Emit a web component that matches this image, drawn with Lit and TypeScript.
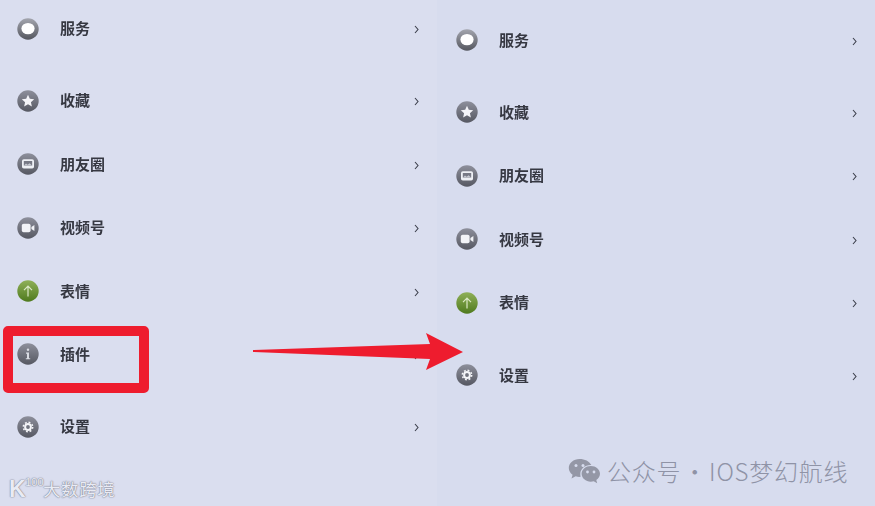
import { LitElement, html, css, svg } from "lit";
import { customElement } from "lit/decorators.js";

type Kind = "chat" | "star" | "photo" | "video" | "up" | "info" | "gear";
interface Item { kind: Kind; label: string; group?: boolean }

const icon = (k: Kind) => {
  const green = k === "up";
  const id = green ? "url(#gg)" : k === "chat" ? "url(#gl)" : "url(#gd)";
  let inner;
  switch (k) {
    case "chat":
      inner = svg`<ellipse cx="11" cy="10.6" rx="6.6" ry="5.7" fill="#fff"/>`;
      break;
    case "star":
      inner = svg`<path d="M11 4.800l1.800 4 4.400.4-3.300 3 1 4.400-3.900-2.300-3.900 2.300 1-4.400-3.300-3 4.400-.4z" fill="#f4f4f8"/>`;
      break;
    case "photo":
      inner = svg`<rect x="5" y="6.200" width="12" height="9.400" rx="1.800" fill="#eef0f5"/><rect x="6.800" y="8" width="8.400" height="4.600" fill="#777985"/><path d="M7 12.600l2-2 1.600 1.200 2-1.600 2.400 2.400z" fill="#c8cad3"/>`;
      break;
    case "video":
      inner = svg`<rect x="4.800" y="6.800" width="8.800" height="8.400" rx="1.800" fill="#f2f3f7"/><path d="M14.400 10l3-2v6l-3-2z" fill="#f2f3f7"/>`;
      break;
    case "up":
      inner = svg`<path d="M11 16.400V6.400M7 10.200l4-4 4 4" fill="none" stroke="#dbe8c6" stroke-width="1.200"/>`;
      break;
    case "info":
      inner = svg`<circle cx="11" cy="6.800" r="1.200" fill="#d9dbe3"/><path d="M9 9.600h3v5.600h1.200v1.100H8.800v-1.100H10v-4.500H9z" fill="#d9dbe3"/>`;
      break;
    case "gear":
      inner = svg`<circle cx="11" cy="11" r="2.900" fill="none" stroke="#f4f5f8" stroke-width="2"/><circle cx="11" cy="11" r="4.700" fill="none" stroke="#f4f5f8" stroke-width="1.500" stroke-dasharray="1.850 1.840"/>`;
      break;
  }
  return html`<svg class="ic" width="22" height="22" viewBox="0 0 22 22">
    <defs>
      <linearGradient id="gd" x1="0" y1="0" x2="0" y2="1"><stop offset="0" stop-color="#8d8f9b"/><stop offset="1" stop-color="#565862"/></linearGradient>
      <linearGradient id="gl" x1="0" y1="0" x2="0" y2="1"><stop offset="0" stop-color="#a3a5ae"/><stop offset="1" stop-color="#55575f"/></linearGradient>
      <linearGradient id="gg" x1="0" y1="0" x2="0" y2="1"><stop offset="0" stop-color="#8fb058"/><stop offset="1" stop-color="#4f7a1e"/></linearGradient>
    </defs>
    <circle cx="11" cy="11" r="10.700" fill="${id}"/>${inner}
  </svg>`;
};

const LEFT: Item[] = [
  { kind: "chat", label: "服务" },
  { kind: "star", label: "收藏", group: true },
  { kind: "photo", label: "朋友圈" },
  { kind: "video", label: "视频号" },
  { kind: "up", label: "表情" },
  { kind: "info", label: "插件" },
  { kind: "gear", label: "设置", group: true },
];
const RIGHT: Item[] = [
  { kind: "chat", label: "服务" },
  { kind: "star", label: "收藏", group: true },
  { kind: "photo", label: "朋友圈" },
  { kind: "video", label: "视频号" },
  { kind: "up", label: "表情" },
  { kind: "gear", label: "设置", group: true },
];

@customElement("app-root")
export class AppRoot extends LitElement {
  static styles = css`
    :host { display: block; width: 875px; height: 506px; position: relative; overflow: hidden; font-family: "Noto Sans CJK SC", "Noto Sans", sans-serif; }
    .page { display: flex; height: 506px; }
    .panel { display: flex; flex-direction: column; box-sizing: border-box; height: 506px; filter: blur(0.35px); }
    .left { width: 437px; gap: 23.4px; padding: 8.800px 18px 0 17px; background: #dadeef; }
    .right { width: 438px; gap: 23.5px; padding: 20.300px 18px 0 19px; background: #d7dcee; }
    .row { display: flex; align-items: center; height: 40px; flex: none; }
    .row.group { margin-top: 8.700px; }
    .ic { flex: none; }
    .label { margin-left: 21px; font-size: 15px; font-weight: 700; color: #363842; flex: 1; line-height: 20px; position: relative; top: -0.500px; }
    .chev { flex: none; margin-top: 2px; }
    .box { position: absolute; left: 3px; top: 326px; width: 146px; height: 67px; box-sizing: border-box; border: 10px solid #ee1c2e; border-radius: 5px; }
    .arrow { position: absolute; left: 250px; top: 330px; }
    .wm1 { position: absolute; left: 9px; top: 474px; display: flex; align-items: center; color: #e9ebf4; text-shadow: 0 0 1.500px #777a8a, 0 0 1px #777a8a; }
    .wm1 .k { font-family: "Liberation Sans", sans-serif; font-size: 23px; font-weight: 700; line-height: 30px; width: 16px; }
    .wm1 .n { font-family: "Liberation Sans", sans-serif; font-size: 11.500px; line-height: 14px; align-self: flex-start; margin-top: 1px; width: 18px; letter-spacing: -0.300px; }
    .wm1 .t { font-size: 17.500px; line-height: 30px; letter-spacing: 0.600px; }
    .wm2 { position: absolute; left: 568px; top: 453px; display: flex; align-items: center; gap: 6px; color: #8f93a6; font-size: 24px; font-weight: 300; line-height: 36px; white-space: pre; letter-spacing: 0.750px; word-spacing: -4.500px; }
  `;

  private renderRow(it: Item) {
    return html`<div class="row ${it.group ? "group" : ""}">
      ${icon(it.kind)}
      <span class="label">${it.label}</span>
      <svg class="chev" width="5" height="9" viewBox="0 0 5 9"><path d="M1 1l3 3.500L1 8" fill="none" stroke="#3c3f4c" stroke-width="1.100"/></svg>
    </div>`;
  }

  render() {
    return html`
      <div class="page">
        <div class="panel left">${LEFT.map((i) => this.renderRow(i))}</div>
        <div class="panel right">${RIGHT.map((i) => this.renderRow(i))}</div>
      </div>
      <div class="box"></div>
      <svg class="arrow" width="216" height="44" viewBox="250 330 216 44">
        <path d="M253 350 L430 344 L426 333 L463 352 L426 370 L430 359 L253 352 Z" fill="#ee1c2e"/>
      </svg>
      <div class="wm1"><span class="k">K</span><span class="n">100</span><span class="t">大数跨境</span></div>
      <div class="wm2">
        <svg width="33" height="27" viewBox="0 0 33 27">
          <path d="M11.500 1C5.500 1 .8 5 .8 10c0 2.800 1.500 5.200 3.800 6.800L3.500 20.500l4.200-2.200c1.200.4 2.500.6 3.800.6.400 0 .8 0 1.200-.1-.3-.9-.4-1.800-.4-2.800 0-5 4.600-8.900 10.200-8.900h.8C21.300 3.200 16.800 1 11.500 1z" fill="#9497a6"/>
          <path d="M32 15.800c0-4.400-4.200-7.900-9.200-7.900s-9.200 3.500-9.200 7.900 4.200 7.900 9.200 7.900c1 0 2-.1 2.900-.4l3.500 2-.9-3.200c2.200-1.500 3.700-3.800 3.700-6.300z" fill="#9497a6"/>
          <circle cx="8" cy="7.500" r="1.500" fill="#d7dcee"/><circle cx="15" cy="7.500" r="1.500" fill="#d7dcee"/>
          <circle cx="19.500" cy="14" r="1.400" fill="#d7dcee"/><circle cx="26" cy="14" r="1.400" fill="#d7dcee"/>
        </svg>
        <span>公众号 · IOS梦幻航线</span>
      </div>
    `;
  }
}
